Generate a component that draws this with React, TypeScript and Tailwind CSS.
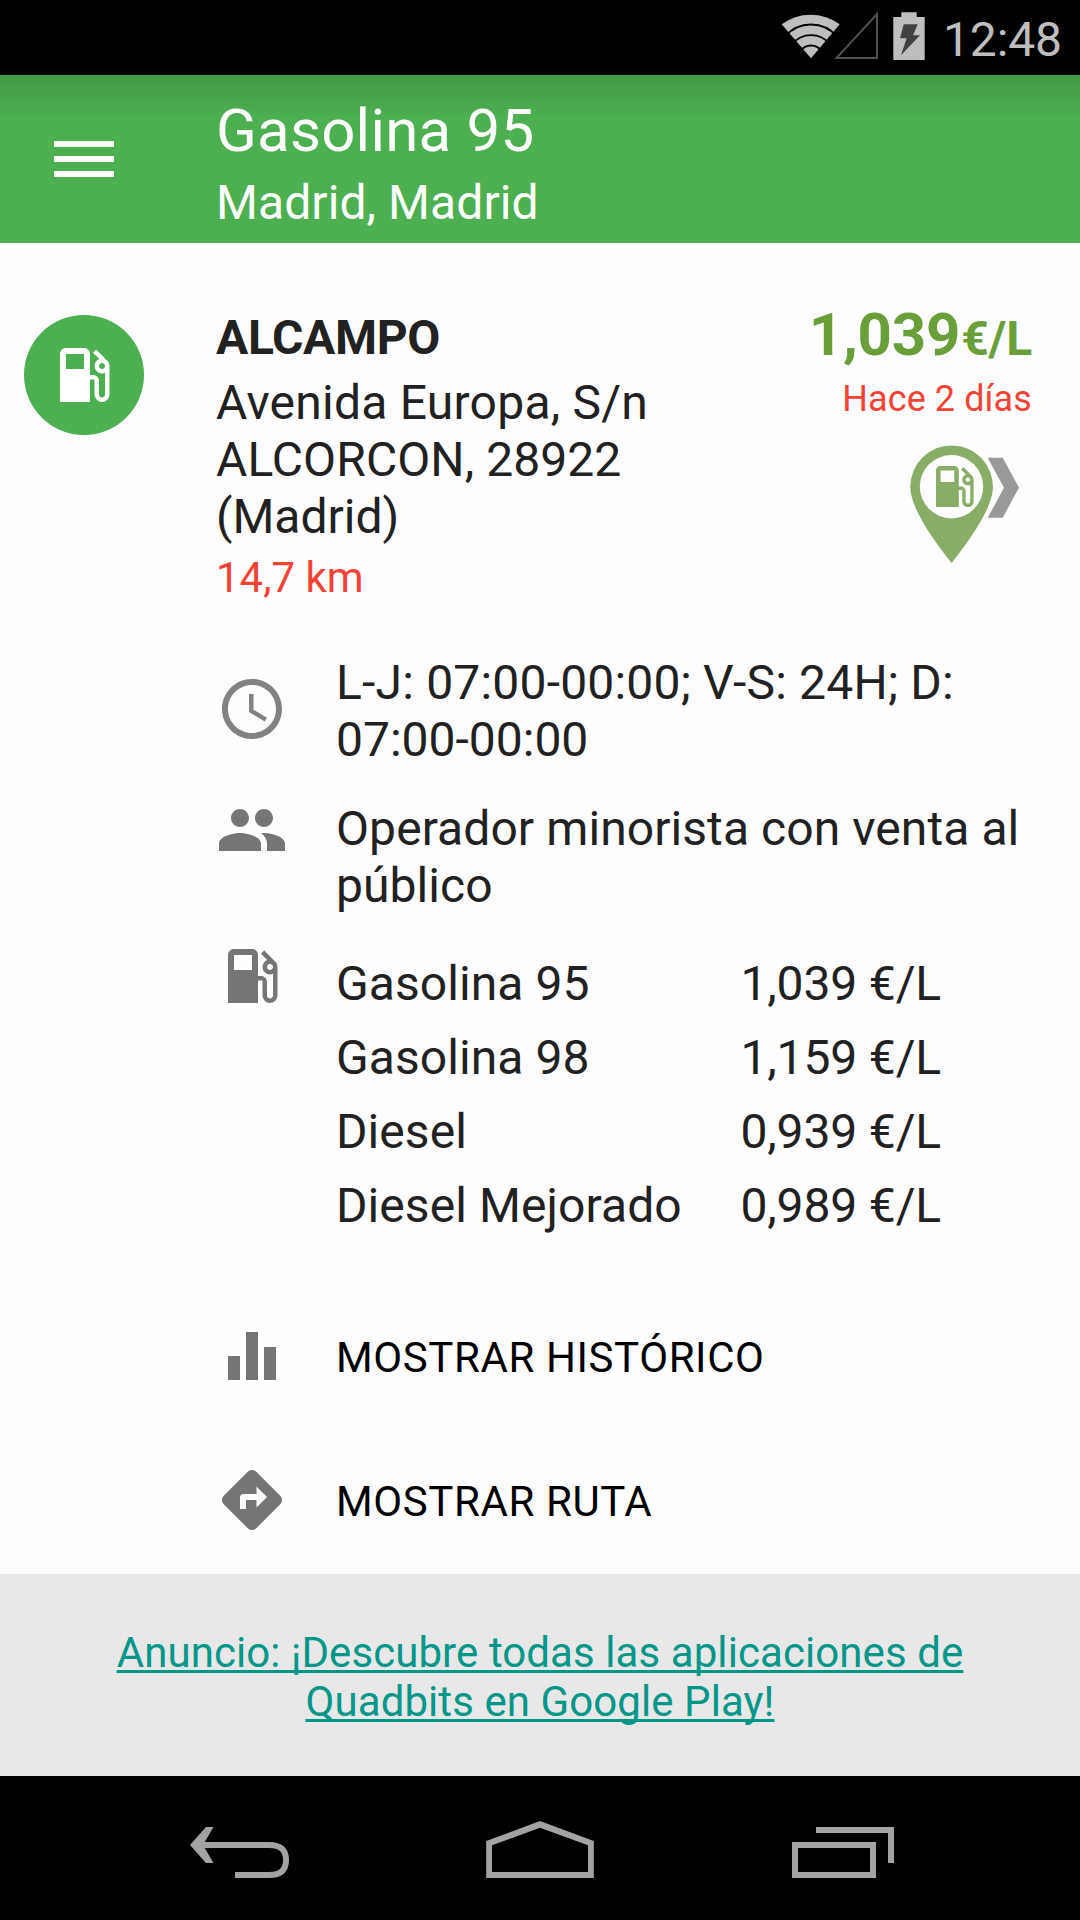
import React from "react";
import {
  MdDirections,
  MdEqualizer,
  MdLocalGasStation,
  MdPeople,
  MdSchedule,
} from "react-icons/md";

interface FuelPrice {
  name: string;
  price: string;
}

interface ActionRowProps {
  icon: React.ReactNode;
  label: string;
}

const fuelPrices: FuelPrice[] = [
  { name: "Gasolina 95", price: "1,039 €/L" },
  { name: "Gasolina 98", price: "1,159 €/L" },
  { name: "Diesel", price: "0,939 €/L" },
  { name: "Diesel Mejorado", price: "0,989 €/L" },
];

const StatusBar: React.FC = () => {
  return (
    <div className="flex h-[75px] items-start justify-end bg-black pr-[18px]">
      <svg width="150" height="75" viewBox="780 0 150 75" className="mr-[12px]">
        <path d="M810 58.3 780.7 24.3Q793.500 14.700 809.600 14.700T838.700 24.300Z" fill="#bebebe" />
        <g fill="none" stroke="#000" strokeWidth="1.900">
          <path d="M784 36.500A34.300 34.300 0 0 1 836 36.500" />
          <path d="M791 44.500A24 24 0 0 1 829 44.500" />
          <path d="M799 51.500A13 13 0 0 1 821 51.500" />
        </g>
        <path d="M876 14V58H835.500Z" fill="none" stroke="#505050" strokeWidth="2" />
        <path d="M900.300 12.300h15.400V17h8v43h-31.400V17h8Z" fill="#bebebe" />
        <path d="M902.700 24.300h14L912 35.300h7L900 55.300l5.700-17h-6.700Z" fill="#404040" />
      </svg>
      <span className="mt-[11px] text-[48px] leading-[57px] tracking-[-0.1px] text-[#bebebe]">
        12:48
      </span>
    </div>
  );
};

const Header: React.FC = () => {
  return (
    <header className="flex h-[168px] bg-[#4caf50] bg-linear-to-b from-black/13 to-transparent to-[42px] text-white">
      <div className="flex w-[216px] flex-col gap-[9px] pt-[66px] pl-[54px]">
        <div className="h-[6px] w-[60px] bg-white" />
        <div className="h-[6px] w-[60px] bg-white" />
        <div className="h-[6px] w-[60px] bg-white" />
      </div>
      <div className="pt-[21px]">
        <h1 className="text-[60px] leading-[70px] tracking-[0.23px]">Gasolina 95</h1>
        <h2 className="mt-2 text-[48px] leading-[57px] tracking-[0.08px]">Madrid, Madrid</h2>
      </div>
    </header>
  );
};

const MapPin: React.FC = () => {
  return (
    <svg width="122" height="120" viewBox="910 444 122 120" className="block">
      <path
        d="M910.300 486.700A41.300 41.300 0 0 1 992.900 486.700C992.900 507 972 537 951.600 563C931 537 910.300 507 910.300 486.700Z"
        fill="#88ad66"
      />
      <circle cx="951.500" cy="486.700" r="31.700" fill="#fdfdfd" />
      <path d="M987.700 457.700h15L1019 487.700l-16.300 30h-15l16.300-30Z" fill="#999" />
      <g transform="translate(926.900 459.200) scale(2.280)" fill="#88ad66">
        <path d="M19.770 7.230l.01-.01-3.720-3.720L15 4.560l2.110 2.110c-.940.360-1.610 1.260-1.610 2.330 0 1.380 1.120 2.500 2.500 2.500.360 0 .690-.080 1-.210v7.210c0 .550-.450 1-1 1s-1-.450-1-1V14c0-1.100-.900-2-2-2h-1V5c0-1.100-.900-2-2-2H6c-1.100 0-2 .900-2 2v16h10v-7.500h1.500v5c0 1.380 1.120 2.500 2.500 2.500s2.500-1.120 2.500-2.500V9c0-.690-.280-1.320-.730-1.770zM12 10H6V5h6v5zm6 0c-.550 0-1-.450-1-1s.450-1 1-1 1 .450 1 1-.450 1-1 1z" />
      </g>
    </svg>
  );
};

const StationSummary: React.FC = () => {
  return (
    <section className="flex h-[411px] pr-12 pl-6">
      <div className="mt-[72px] flex size-[120px] items-center justify-center rounded-full bg-[#4caf50]">
        <MdLocalGasStation className="size-[72px] text-white" />
      </div>
      <div className="ml-[72px] w-[480px] pt-[66px]">
        <h3 className="text-[48px] leading-[57px] font-bold tracking-[-0.35px]">ALCAMPO</h3>
        <p className="mt-2 text-[48px] leading-[57px]">
          <span className="tracking-[0.24px]">Avenida Europa, S/n</span>
          <br />
          <span className="tracking-[0.08px]">ALCORCON, 28922</span>
          <br />
          (Madrid)
        </p>
        <p className="mt-2 text-[42px] leading-[49px] text-[#f44336]">14,7 km</p>
      </div>
      <div className="flex flex-1 flex-col items-end pt-[57px]">
        <p className="text-[60px] leading-[70px] font-bold tracking-[-0.2px] whitespace-nowrap text-[#689f38]">
          1,039<span className="ml-px text-[48px]">€/L</span>
        </p>
        <p className="mt-1 text-[36px] leading-[42px] tracking-[0.1px] text-[#f44336]">
          Hace 2 días
        </p>
        <div className="mt-6">
          <MapPin />
        </div>
      </div>
    </section>
  );
};

const ActionRow: React.FC<ActionRowProps> = ({ icon, label }) => {
  return (
    <button className="flex h-[72px] items-center text-[#757575]">
      {icon}
      <span className="mt-0.5 ml-12 text-[42px] leading-[49px] tracking-[0.6px] text-black">
        {label}
      </span>
    </button>
  );
};

const NavBar: React.FC = () => {
  return (
    <nav className="flex h-36 items-start bg-black pt-[42px] pl-[189px]">
      <svg width="102" height="64" viewBox="189 1818 102 64" fill="none">
        <path d="M206 1827h7.500L203 1845l10.500 18H206L190 1845Z" fill="#a3a3a3" />
        <path
          d="M198 1845H269C281 1845 286 1850 286 1860S281 1875 269 1875H235"
          stroke="#a3a3a3"
          strokeWidth="6"
        />
      </svg>
      <svg width="110" height="64" viewBox="485 1818 110 64" className="ml-[194px]">
        <path
          d="M486.200 1841 540 1821l53.800 20v37H486.200ZM492 1845.300V1872h96v-26.700L540 1827.700Z"
          fill="#a3a3a3"
          fillRule="evenodd"
        />
      </svg>
      <svg width="106" height="64" viewBox="790 1818 106 64" className="ml-[195px]">
        <path
          d="M792 1842h84v36h-84ZM798 1848v24h72v-24ZM816 1827h78v36h-6v-30h-72Z"
          fill="#a3a3a3"
          fillRule="evenodd"
        />
      </svg>
    </nav>
  );
};

const App: React.FC = () => {
  return (
    <div className="h-[1920px] w-[1080px] overflow-hidden bg-[#fdfdfd] font-[Roboto,sans-serif] text-[#212121]">
      <StatusBar />
      <Header />
      <main className="h-[1331px]">
        <StationSummary />
        <section className="pl-[216px] text-[48px] leading-[57px]">
          <div className="flex">
            <MdSchedule className="mt-[19px] size-[72px] shrink-0 text-[#757575] opacity-90" />
            <p className="ml-12">
              <span className="tracking-[0.2px]">L-J: 07:00-00:00; V-S: 24H; D:</span>
              <br />
              07:00-00:00
            </p>
          </div>
          <div className="mt-8 flex">
            <MdPeople className="-mt-1.5 size-[72px] shrink-0 text-[#757575]" />
            <p className="ml-12 tracking-[0.08px]">
              Operador minorista con venta al
              <br />
              público
            </p>
          </div>
          <div className="mt-[26px] flex">
            <MdLocalGasStation className="size-[72px] shrink-0 text-[#757575]" />
            <div className="mt-[15px] ml-12 flex w-[605px] flex-col gap-[17px]">
              {fuelPrices.map((fuel) => (
                <div key={fuel.name} className="flex justify-between">
                  <span className="tracking-[0.08px]">{fuel.name}</span>
                  <span className="tracking-[-0.15px]">{fuel.price}</span>
                </div>
              ))}
            </div>
          </div>
        </section>
        <section className="mt-[86px] flex flex-col gap-[72px] pl-[216px]">
          <ActionRow icon={<MdEqualizer className="size-[72px]" />} label="MOSTRAR HISTÓRICO" />
          <ActionRow icon={<MdDirections className="size-[72px]" />} label="MOSTRAR RUTA" />
        </section>
      </main>
      <footer className="flex h-[202px] justify-center bg-[#e8e8e8] pt-[54px] text-center">
        <a className="text-[42px] leading-[49px] tracking-[0.08px] text-[#009688] underline decoration-[3px] underline-offset-[3px] [text-decoration-skip-ink:none]">
          Anuncio: ¡Descubre todas las aplicaciones de
          <br />
          Quadbits en Google Play!
        </a>
      </footer>
      <NavBar />
    </div>
  );
};

export default App;
